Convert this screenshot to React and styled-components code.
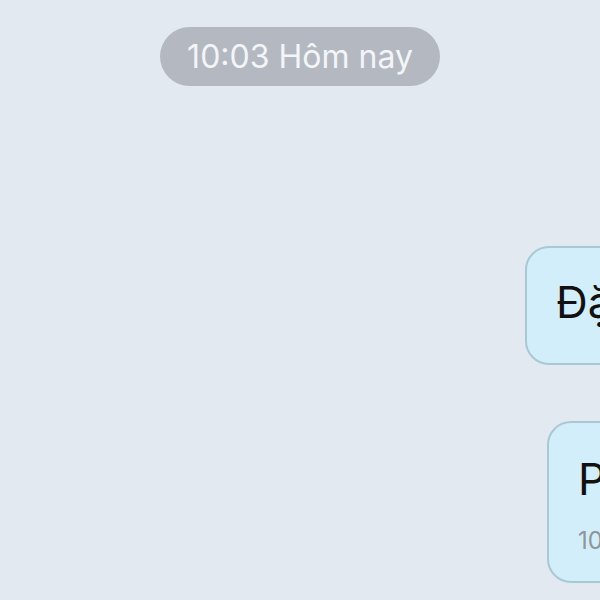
import React from "react";
import styled, { createGlobalStyle } from "styled-components";

const Global = createGlobalStyle`
  html, body {
    margin: 0;
    padding: 0;
    background: #e2e9f1;
    overflow: hidden;
  }
  body {
    font-family: Inter, "Noto Sans", "Liberation Sans", sans-serif;
  }
`;

const Screen = styled.div`
  width: 600px;
  height: 600px;
  overflow: hidden;
  background: #e2e9f1;
  display: flex;
  flex-direction: column;
  padding-top: 27px;
  box-sizing: border-box;
`;

const TimePill = styled.div`
  align-self: center;
  height: 59px;
  box-sizing: border-box;
  padding: 0 27px;
  border-radius: 30px;
  background: #b4b9c1;
  color: #f3f5f8;
  font-size: 32px;
  display: flex;
  align-items: center;
  white-space: nowrap;
`;

const Row = styled.div`
  display: flex;
  padding-left: ${(p) => p.$indent}px;
  margin-top: ${(p) => p.$gap}px;
`;

const Bubble = styled.div`
  flex: none;
  white-space: nowrap;
  background: #d3eefb;
  border: 2px solid #aac8d4;
  border-radius: 24px;
  padding: ${(p) => (p.$withTime ? "30px 30px 26px 29px" : "28px 30px 35px 29px")};
  display: flex;
  flex-direction: column;
`;

const MsgText = styled.div`
  font-size: 44px;
  line-height: 52px;
  color: #111;
`;

const MsgTime = styled.div`
  margin-top: 21px;
  font-size: 24px;
  line-height: 29px;
  color: #8f959a;
`;

export default function App() {
  return (
    <>
      <Global />
      <Screen>
        <TimePill>10:03 Hôm nay</TimePill>
        <Row $indent={525} $gap={160}>
          <Bubble>
            <MsgText>Đặt lịch hẹn thành công</MsgText>
          </Bubble>
        </Row>
        <Row $indent={547} $gap={56}>
          <Bubble $withTime>
            <MsgText>Phòng khám sẽ liên hệ</MsgText>
            <MsgTime>10:03</MsgTime>
          </Bubble>
        </Row>
      </Screen>
    </>
  );
}
